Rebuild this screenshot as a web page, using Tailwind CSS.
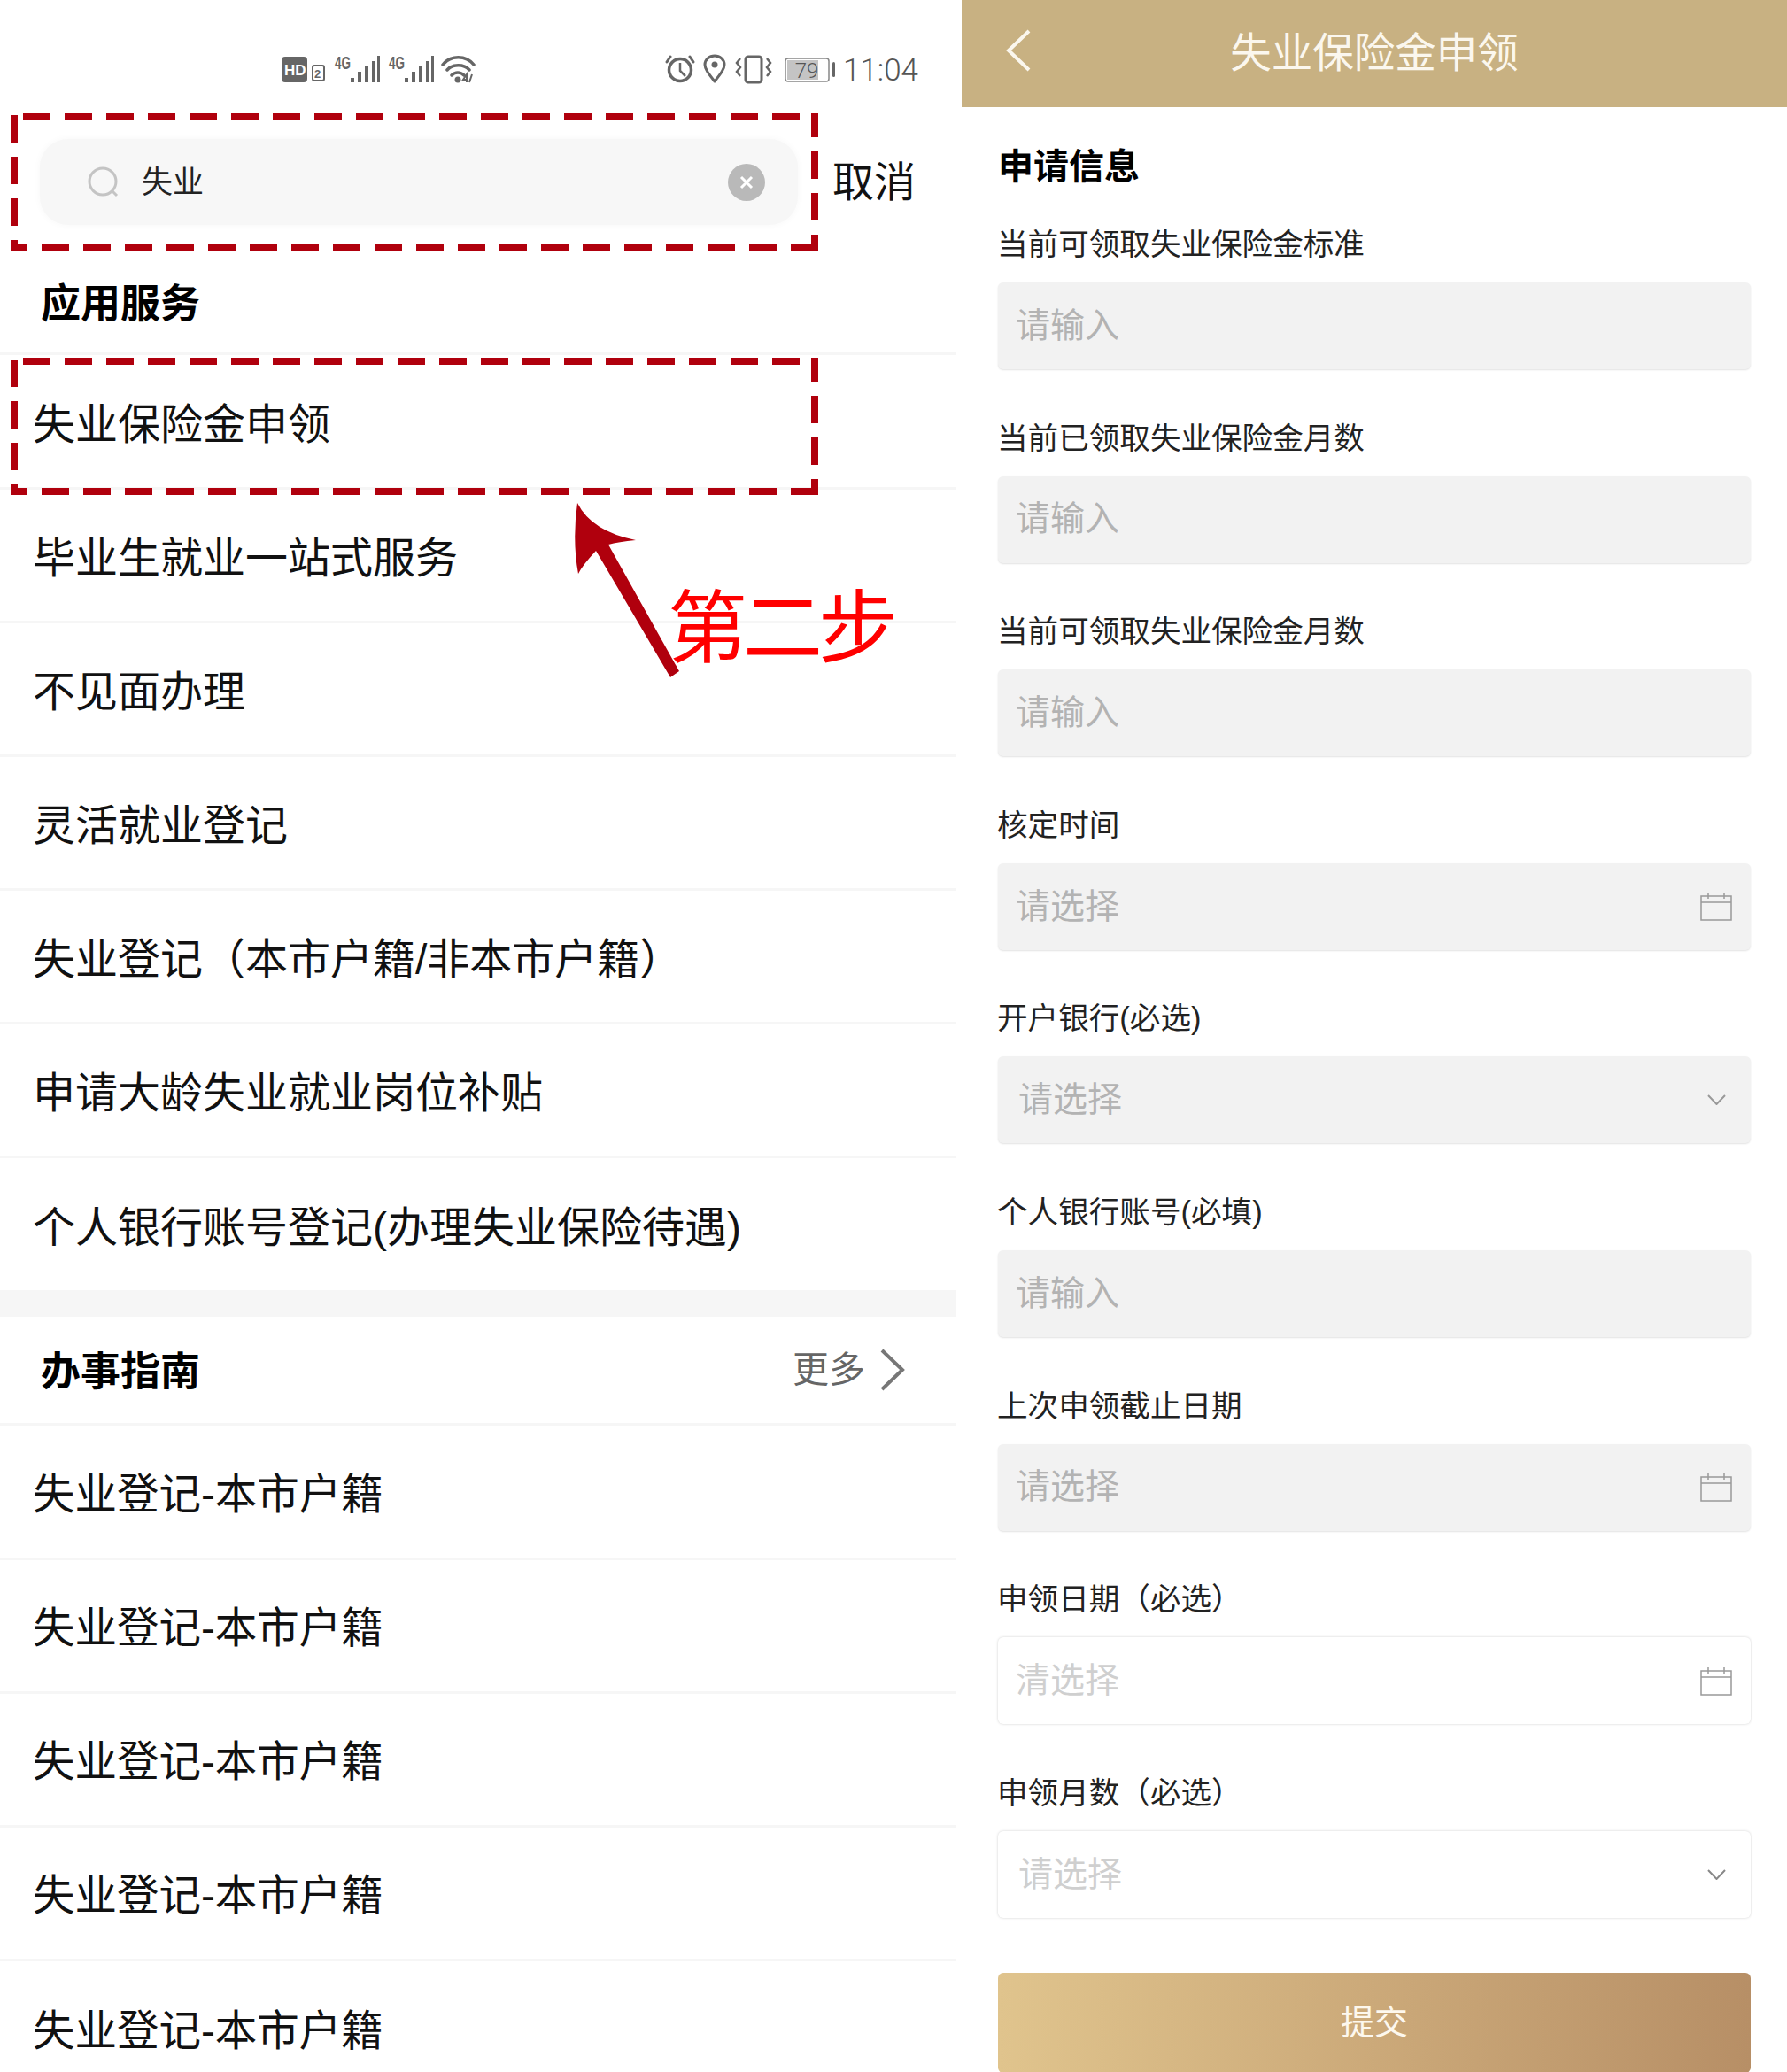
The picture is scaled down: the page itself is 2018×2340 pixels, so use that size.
<!DOCTYPE html>
<html lang="zh-CN">
<head>
    <meta charset="UTF-8">
    <title>失业保险金申领</title>
    <script src="https://cdn.jsdelivr.net/npm/@tailwindcss/browser@4"></script>
</head>
<body class="bg-white font-['Liberation_Sans','Noto_Sans_CJK_SC',sans-serif]">
<div class="relative flex w-[2018px] h-[2340px] overflow-hidden bg-white">

    <!-- search results -->
    <section class="w-[1086px] pr-[6px] shrink-0 text-[48px] leading-none text-[#111]">
        <svg class="block" width="1080" height="128" viewBox="0 0 1080 128" fill="none">
            <rect x="318" y="64" width="29" height="29" rx="4" fill="#666"/>
            <text x="321" y="85" font-size="17" font-weight="700" fill="#fff" font-family="Liberation Sans">HD</text>
            <rect x="353" y="74" width="13" height="17" rx="2" stroke="#666" stroke-width="2"/>
            <text x="355" y="88" font-size="13" font-weight="700" fill="#666" font-family="Liberation Sans">2</text>
            <text x="378" y="78" font-size="20" font-weight="700" fill="#666" font-family="Liberation Sans" textLength="18" lengthAdjust="spacingAndGlyphs">4G</text>
            <g fill="#666">
                <rect x="396" y="88" width="4" height="5"/><rect x="404" y="81" width="4" height="12"/><rect x="412" y="75" width="4" height="18"/><rect x="420" y="69" width="4" height="24"/><rect x="426" y="63" width="3" height="30"/>
            </g>
            <text x="439" y="78" font-size="20" font-weight="700" fill="#666" font-family="Liberation Sans" textLength="18" lengthAdjust="spacingAndGlyphs">4G</text>
            <g fill="#666">
                <rect x="457" y="88" width="4" height="5"/><rect x="465" y="81" width="4" height="12"/><rect x="473" y="75" width="4" height="18"/><rect x="481" y="69" width="4" height="24"/><rect x="487" y="63" width="3" height="30"/>
            </g>
            <g stroke="#666" stroke-width="3.5" stroke-linecap="round">
                <path d="M500 73C509 62 526 62 535 73"/>
                <path d="M505 79C511 72 524 72 530 79"/>
                <path d="M510 85C514 81 520 81 524 85"/>
            </g>
            <circle cx="517" cy="90" r="3.5" fill="#666"/>
            <path d="M527 93V84L523 90H529M533 84L530 93" stroke="#666" stroke-width="2"/>

            <circle cx="768" cy="79" r="12.5" stroke="#666" stroke-width="3.5"/>
            <path d="M768 71V80L774 86" stroke="#666" stroke-width="2.5"/>
            <path d="M757 64L753 70M779 64L783 70" stroke="#666" stroke-width="3" stroke-linecap="round"/>
            <path d="M807 92C800 83 796 78 796 73A11 10 0 0 1 818 73C818 78 814 83 807 92Z" stroke="#666" stroke-width="3" stroke-linejoin="round"/>
            <circle cx="807" cy="73" r="3.5" fill="#666"/>
            <rect x="842" y="64" width="18" height="29" rx="3" stroke="#666" stroke-width="3"/>
            <path d="M836 66L832 71L836 76L832 81L836 86M866 66L870 71L866 76L870 81L866 86" stroke="#666" stroke-width="2.5"/>
            <rect x="887" y="66" width="49" height="26" rx="3" stroke="#888" stroke-width="1.5"/>
            <rect x="889" y="68" width="35" height="22" fill="#c4c4c4"/>
            <rect x="940" y="70" width="3" height="17" rx="1.5" fill="#666"/>
            <text x="911" y="88" text-anchor="middle" font-size="24" fill="#555" font-family="Roboto" font-weight="300">79</text>
            <text x="952" y="91" font-size="35" fill="#555" font-family="Roboto" font-weight="300">11:04</text>
        </svg>

        <div class="flex h-[155px] items-center pl-[45px]">
            <div class="flex w-[856px] h-[97px] items-center rounded-[32px] bg-[#f7f7f7] pl-[54px] pr-[37px] shadow-[0_0_8px_#f7f7f7]">
                <svg class="shrink-0" width="36" height="36" viewBox="0 0 36 36" fill="none" stroke="#c4c4c4" stroke-width="3">
                    <circle cx="17" cy="17" r="15"/><path d="M28 28L33 33"/>
                </svg>
                <span class="ml-[25px] text-[35px] text-[#222]">失业</span>
                <span class="ml-auto flex w-[42px] h-[42px] items-center justify-center rounded-full bg-[#b9b9b9]">
                    <svg width="18" height="18" viewBox="0 0 18 18" stroke="#fff" stroke-width="3"><path d="M3 3L15 15M15 3L3 15"/></svg>
                </span>
            </div>
            <span class="ml-[39px] text-[47px]">取消</span>
        </div>

        <div class="flex h-[118px] items-center border-b-[3px] border-[#f6f6f6] pl-[46px] pt-[5px] text-[45px] font-bold text-black">应用服务</div>
        <div class="flex h-[152px] items-center border-b-[3px] border-[#f6f6f6] pl-[37px] pt-[8px]">失业保险金申领</div>
        <div class="flex h-[151px] items-center border-b-[3px] border-[#f6f6f6] pl-[37px] pt-[8px]">毕业生就业一站式服务</div>
        <div class="flex h-[151px] items-center border-b-[3px] border-[#f6f6f6] pl-[37px] pt-[8px]">不见面办理</div>
        <div class="flex h-[151px] items-center border-b-[3px] border-[#f6f6f6] pl-[37px] pt-[8px]">灵活就业登记</div>
        <div class="flex h-[151px] items-center border-b-[3px] border-[#f6f6f6] pl-[37px] pt-[8px]">失业登记（本市户籍/非本市户籍）</div>
        <div class="flex h-[151px] items-center border-b-[3px] border-[#f6f6f6] pl-[37px] pt-[8px]">申请大龄失业就业岗位补贴</div>
        <div class="flex h-[149px] items-center pl-[37px] pt-[8px]">个人银行账号登记(办理失业保险待遇)</div>
        <div class="h-[30px] bg-[#f6f6f6]"></div>

        <div class="flex h-[123px] items-center justify-between border-b-[3px] border-[#f6f6f6] pl-[46px] pr-[58px]">
            <span class="pt-[5px] text-[45px] font-bold text-black">办事指南</span>
            <span class="flex items-center gap-[17px] text-[41px] text-[#666]">更多
                <svg width="28" height="48" viewBox="0 0 28 48" fill="none" stroke="#777" stroke-width="4"><path d="M2 2L25 24L2 46"/></svg>
            </span>
        </div>
        <div class="flex h-[152px] items-center border-b-[3px] border-[#f6f6f6] pl-[37px] pt-[6px] text-[47.5px]">失业登记-本市户籍</div>
        <div class="flex h-[151px] items-center border-b-[3px] border-[#f6f6f6] pl-[37px] pt-[6px] text-[47.5px]">失业登记-本市户籍</div>
        <div class="flex h-[151px] items-center border-b-[3px] border-[#f6f6f6] pl-[37px] pt-[6px] text-[47.5px]">失业登记-本市户籍</div>
        <div class="flex h-[151px] items-center border-b-[3px] border-[#f6f6f6] pl-[37px] pt-[6px] text-[47.5px]">失业登记-本市户籍</div>
        <div class="flex h-[151px] items-center pl-[37px] pt-[6px] text-[47.5px]">失业登记-本市户籍</div>
    </section>

    <!-- application form -->
    <section class="w-[932px] shrink-0">
        <header class="relative flex h-[121px] items-center justify-center bg-[#c8b182] text-[46.5px] leading-none text-[#fbf7ee]">
            <svg class="absolute left-[49px] top-[33px]" width="30" height="48" viewBox="0 0 30 48" fill="none" stroke="#fbf7ee" stroke-width="4"><path d="M27 2L4 24L27 46"/></svg>
            失业保险金申领
        </header>
        <div class="pl-[41px] pr-[41px]">
            <h2 class="mt-[47px] mb-[47px] h-[40px] text-[40px] leading-[40px] font-bold text-black">申请信息</h2>
            <div class="flex flex-col gap-y-[56.6px] text-[#222]">
                <div>
                    <div class="mb-[24px] -ml-[1px] h-[40px] text-[34.6px] leading-[42px]">当前可领取失业保险金标准</div>
                    <div class="flex h-[98px] items-center rounded-[6px] bg-[#f2f2f2] pl-[20px] text-[39px] text-[#b3b3b3] shadow-[0_1px_2px_#e2e2e2]">请输入</div>
                </div>
                <div>
                    <div class="mb-[24px] -ml-[1px] h-[40px] text-[34.6px] leading-[42px]">当前已领取失业保险金月数</div>
                    <div class="flex h-[98px] items-center rounded-[6px] bg-[#f2f2f2] pl-[20px] text-[39px] text-[#b3b3b3] shadow-[0_1px_2px_#e2e2e2]">请输入</div>
                </div>
                <div>
                    <div class="mb-[24px] -ml-[1px] h-[40px] text-[34.6px] leading-[42px]">当前可领取失业保险金月数</div>
                    <div class="flex h-[98px] items-center rounded-[6px] bg-[#f2f2f2] pl-[20px] text-[39px] text-[#b3b3b3] shadow-[0_1px_2px_#e2e2e2]">请输入</div>
                </div>
                <div>
                    <div class="mb-[24px] -ml-[1px] h-[40px] text-[34.6px] leading-[42px]">核定时间</div>
                    <div class="flex h-[98px] items-center justify-between rounded-[6px] bg-[#f2f2f2] pl-[20px] pr-[21px] text-[39px] text-[#b3b3b3] shadow-[0_1px_2px_#e2e2e2]">请选择
                        <svg width="36" height="33" viewBox="0 0 36 33" fill="none" stroke="#999" stroke-width="1.5"><path d="M1 5H35V32H1ZM1 12H35M9 1V8M27 1V8"/></svg>
                    </div>
                </div>
                <div>
                    <div class="mb-[24px] -ml-[1px] h-[40px] text-[34.6px] leading-[42px]">开户银行(必选)</div>
                    <div class="flex h-[98px] items-center justify-between rounded-[6px] bg-[#f2f2f2] pl-[23px] pr-[28px] text-[39px] text-[#b3b3b3] shadow-[0_1px_2px_#e2e2e2]">请选择
                        <svg width="21" height="12" viewBox="0 0 21 12" fill="none" stroke="#999" stroke-width="2"><path d="M1 1L10.5 11L20 1"/></svg>
                    </div>
                </div>
                <div>
                    <div class="mb-[24px] -ml-[1px] h-[40px] text-[34.6px] leading-[42px]">个人银行账号(必填)</div>
                    <div class="flex h-[98px] items-center rounded-[6px] bg-[#f2f2f2] pl-[20px] text-[39px] text-[#b3b3b3] shadow-[0_1px_2px_#e2e2e2]">请输入</div>
                </div>
                <div>
                    <div class="mb-[24px] -ml-[1px] h-[40px] text-[34.6px] leading-[42px]">上次申领截止日期</div>
                    <div class="flex h-[98px] items-center justify-between rounded-[6px] bg-[#f2f2f2] pl-[20px] pr-[21px] text-[39px] text-[#b3b3b3] shadow-[0_1px_2px_#e2e2e2]">请选择
                        <svg width="36" height="33" viewBox="0 0 36 33" fill="none" stroke="#999" stroke-width="1.5"><path d="M1 5H35V32H1ZM1 12H35M9 1V8M27 1V8"/></svg>
                    </div>
                </div>
                <div>
                    <div class="mb-[24px] -ml-[1px] h-[40px] text-[34.6px] leading-[42px]">申领日期（必选）</div>
                    <div class="flex h-[98px] items-center justify-between rounded-[6px] bg-white pl-[20px] pr-[21px] text-[39px] text-[#cfcfcf] shadow-[0_0_3px_#d0d0d0]">清选择
                        <svg width="36" height="33" viewBox="0 0 36 33" fill="none" stroke="#999" stroke-width="1.5"><path d="M1 5H35V32H1ZM1 12H35M9 1V8M27 1V8"/></svg>
                    </div>
                </div>
                <div>
                    <div class="mb-[24px] -ml-[1px] h-[40px] text-[34.6px] leading-[42px]">申领月数（必选）</div>
                    <div class="flex h-[98px] items-center justify-between rounded-[6px] bg-white pl-[23px] pr-[28px] text-[39px] text-[#cfcfcf] shadow-[0_0_3px_#d0d0d0]">请选择
                        <svg width="21" height="12" viewBox="0 0 21 12" fill="none" stroke="#888" stroke-width="2"><path d="M1 1L10.5 11L20 1"/></svg>
                    </div>
                </div>
            </div>
            <button class="mt-[62px] flex h-[113px] w-full items-center justify-center rounded-[6px] bg-gradient-to-r from-[#e0c48d] to-[#b78f66] text-[38px] text-[#fdf8ee]">提交</button>
        </div>
    </section>

    <!-- red annotation drawn over the screenshot -->
    <svg class="absolute left-0 top-0 pointer-events-none" width="1086" height="780" viewBox="0 0 1086 780" fill="none" stroke="#b0000d" stroke-width="8" stroke-dasharray="31 16">
        <path d="M26 132H904M924 279H12M16 130V283"/>
        <path d="M920 128V283" stroke-dashoffset="4"/>
        <path d="M26 408H904M924 555H12M16 406V559"/>
        <path d="M920 404V559" stroke-dashoffset="4"/>
        <path d="M652 568Q668 600 718 610Q698 612 687 615L767 758L757 765L673 622Q658 638 653 648Q646 610 652 568Z" fill="#b0000d" stroke="none"/>
    </svg>
    <span class="absolute left-[754px] top-[655px] text-[90px] leading-[110px] tracking-[-5px] text-[#ff0000]">第二步</span>
</div>
</body>
</html>
